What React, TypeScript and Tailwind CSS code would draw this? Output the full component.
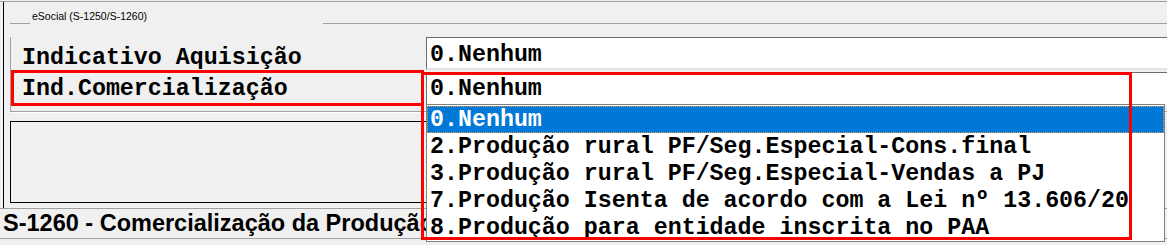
import React from 'react'

const opcoes = [
  '0.Nenhum',
  '2.Produção rural PF/Seg.Especial-Cons.final',
  '3.Produção rural PF/Seg.Especial-Vendas a PJ',
  '7.Produção Isenta de acordo com a Lei nº 13.606/20',
  '8.Produção para entidade inscrita no PAA',
]

const mono = "font-['Liberation_Mono','Courier_New',monospace] font-bold text-[23.3px] text-black"

export default function App() {
  return (
    <div className="relative w-[1167px] h-[245px] overflow-hidden bg-[#f0f0f0] font-['Liberation_Sans',Arial,sans-serif]">
      <div className="h-px" />
      <div className="border-t border-[#a0a0a0]" />

      {/* área principal */}
      <div className="ml-[3px] h-[206px] border-l border-black pl-[6px]">
        <div className="h-[21px] pl-[22px] pt-[9px] text-[10.5px] leading-[11px] text-black">eSocial (S-1250/S-1260)</div>

        {/* group box */}
        <div className="flex h-px">
          <div className="w-[20px] bg-[#a0a0a0]" />
          <div className="w-[293px]" />
          <div className="flex-1 bg-[#a0a0a0]" />
        </div>
        <div className="border-l border-b border-[#a0a0a0] pb-[7px]">
          <div className="flex h-[33px] mt-[13px]">
            <div className={`w-[415px] pl-[11px] pt-[5px] leading-[33px] ${mono}`}>Indicativo Aquisição</div>
            <div className={`flex-1 bg-white border-t border-l border-[#6d6d6d] border-b-2 border-b-[#e3e3e3] pl-[3px] pt-[2px] leading-[30px] ${mono}`}>0.Nenhum</div>
          </div>
          <div className="flex h-[34px]">
            <div className={`w-[415px] pl-[11px] pt-[2px] leading-[34px] ${mono}`}>Ind.Comercialização</div>
            <div className={`flex-1 mt-[2px] bg-white border-t border-l border-[#6d6d6d] pl-[3px] pt-px leading-[30px] ${mono}`}>0.Nenhum</div>
          </div>
        </div>
        <div className="h-px bg-white" />

        <div className="mt-[8px] h-[82px] w-[1150px] border border-black" />
      </div>

      {/* barra de status */}
      <div className="h-[31px] border-t border-b border-[#a0a0a0] pl-[3px] text-[23.5px] font-bold leading-[28px] text-black whitespace-nowrap">
        S-1260 - Comercialização da Produção
      </div>

      {/* lista aberta do combo */}
      <div className="absolute left-[426px] top-[104px] w-[739px] h-[138px] bg-white border border-[#828282] pt-px">
        {opcoes.map((o, i) => (
          <div
            key={o}
            className={`h-[27px] pl-[2px] leading-[27px] whitespace-nowrap font-['Liberation_Mono','Courier_New',monospace] font-bold text-[23.3px] ${i === 0 ? 'bg-[#0078d7] text-white border border-dotted border-[#e89a50]' : 'text-black border border-transparent'}`}
          >
            {o}
          </div>
        ))}
      </div>

      {/* destaques vermelhos */}
      <div className="absolute left-[11px] top-[70px] w-[413px] h-[36px] border-[3px] border-[#ff0000]" />
      <div className="absolute left-[421px] top-[72px] w-[711px] h-[168px] border-[3px] border-[#ff0000]" />
    </div>
  )
}
